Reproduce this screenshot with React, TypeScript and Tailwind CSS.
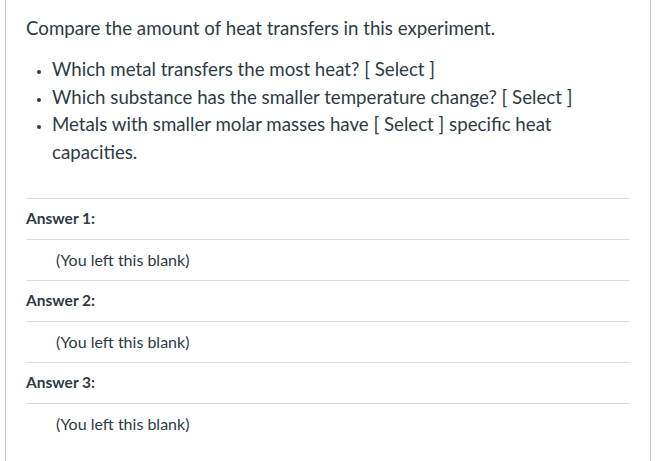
import React from 'react';

const questions = [
  'Which metal transfers the most heat? [ Select ]',
  'Which substance has the smaller temperature change? [ Select ]',
  'Metals with smaller molar masses have [ Select ] specific heat capacities.',
];

const answers = ['Answer 1:', 'Answer 2:', 'Answer 3:'];

export default function App() {
  return (
    <div className="w-[656px] h-[461px] bg-white overflow-hidden" style={{ fontFamily: 'Lato, "Open Sans", sans-serif' }}>
      <div className="ml-[5px] w-[646px] h-[461px] border-x border-[#c7cdd1] px-5 pt-[15px] text-[#2d3b45]">
        {/* Question text */}
        <p className="text-[18.7px] leading-[27px]">Compare the amount of heat transfers in this experiment.</p>
        <ul className="mt-[14px] pl-[26px] text-[18.7px] leading-[27.7px] list-disc">
          {questions.map((q, i) => (
            <li key={i} className="pl-0 marker:text-[13px]">
              {q}
            </li>
          ))}
        </ul>

        {/* Answers */}
        <div className="mt-[31px]">
          {answers.map((a) => (
            <div key={a}>
              <div className="h-[41px] border-t border-[#dddddd] flex items-center text-[15.5px] font-bold">{a}</div>
              <div className="h-[41px] border-t border-[#dddddd] flex items-center pl-[30px] text-[16px]">(You left this blank)</div>
            </div>
          ))}
        </div>
      </div>
    </div>
  );
}
